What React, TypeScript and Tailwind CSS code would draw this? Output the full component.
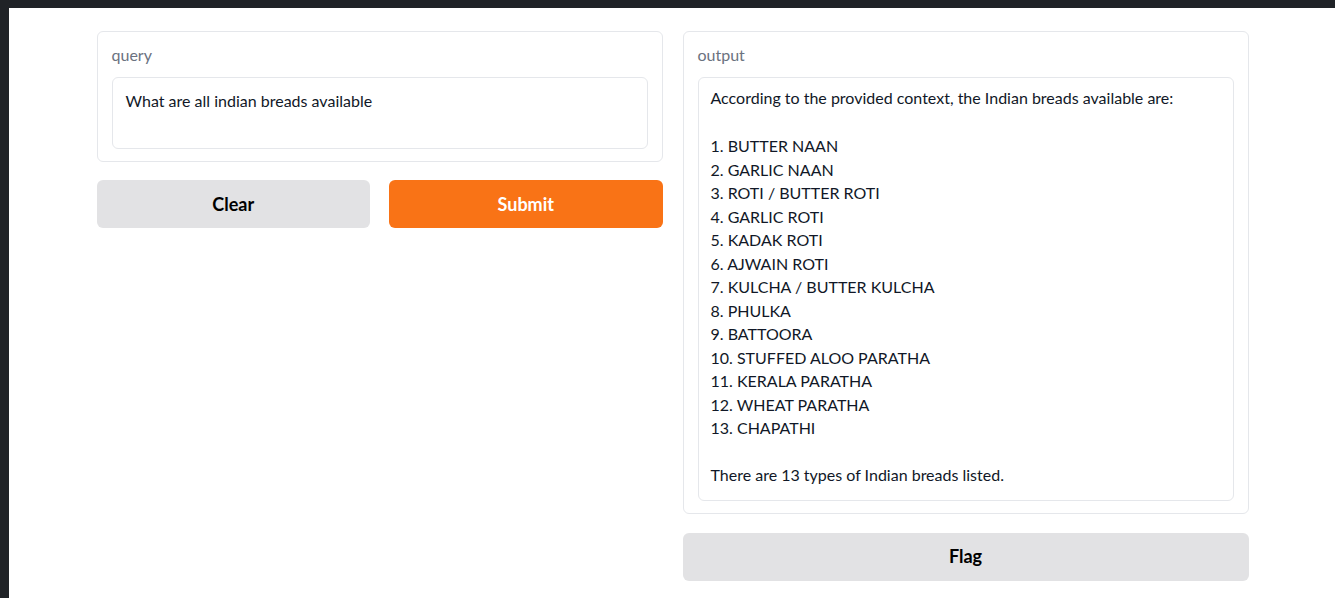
const breads = [
  "BUTTER NAAN",
  "GARLIC NAAN",
  "ROTI / BUTTER ROTI",
  "GARLIC ROTI",
  "KADAK ROTI",
  "AJWAIN ROTI",
  "KULCHA / BUTTER KULCHA",
  "PHULKA",
  "BATTOORA",
  "STUFFED ALOO PARATHA",
  "KERALA PARATHA",
  "WHEAT PARATHA",
  "CHAPATHI",
];

function App() {
  return (
    <div className="min-h-screen bg-[#202327] pl-[9px] pt-[8px] font-['Lato',sans-serif] text-[#111827]">
      <div className="min-h-[590px] bg-white pl-px pt-[23px]">
        <div className="mx-auto flex max-w-[1152px] items-start gap-5">
          <div className="flex flex-1 flex-col gap-[18px]">
            <div className="rounded-md border border-[#e5e7eb] px-[14px] pb-3 pt-[13px]">
              <div className="mb-[12px] text-[16px] leading-5 text-[#6b7280]">query</div>
              <div className="h-[72px] rounded-md border border-[#e5e7eb] px-[13px] py-[11px] text-[16px] leading-[23px]">
                What are all indian breads available
              </div>
            </div>
            <div className="flex gap-[19px]">
              <button
                type="button"
                className="h-12 flex-1 rounded-md bg-[#e2e2e4] text-[18px] font-bold text-black"
              >
                Clear
              </button>
              <button
                type="button"
                className="h-12 flex-1 rounded-md bg-[#f97316] text-[18px] font-bold text-white"
              >
                Submit
              </button>
            </div>
          </div>
          <div className="flex flex-1 flex-col gap-[19px]">
            <div className="rounded-md border border-[#e5e7eb] px-[14px] pb-3 pt-[13px]">
              <div className="mb-[12px] text-[16px] leading-5 text-[#6b7280]">output</div>
              <div className="rounded-md border border-[#e5e7eb] px-[12px] pb-[13px] pt-[8px] text-[16px] leading-[23.5px]">
                <p>According to the provided context, the Indian breads available are:</p>
                <p className="h-[24.5px]" />
                {breads.map((b, i) => (
                  <p key={b}>
                    {i + 1}. {b}
                  </p>
                ))}
                <p className="h-[23.5px]" />
                <p>There are 13 types of Indian breads listed.</p>
              </div>
            </div>
            <button
              type="button"
              className="h-12 w-full rounded-md bg-[#e2e2e4] text-[18px] font-bold text-black"
            >
              Flag
            </button>
          </div>
        </div>
      </div>
    </div>
  );
}

export default App;
